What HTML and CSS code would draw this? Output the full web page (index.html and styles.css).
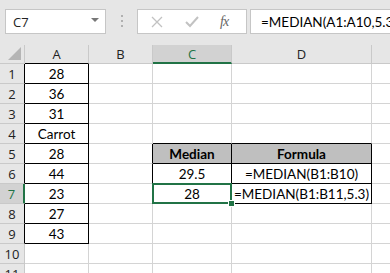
FILE: index.html
```
<!DOCTYPE html>
<html lang="en">
<head>
    <meta charset="UTF-8">
    <title>Median</title>
    <link rel="stylesheet" href="styles.css">
</head>
<body>
    <div class="bar">
        <div class="namebox">
            <span>C7</span>
            <svg class="arrow" width="8" height="5" viewBox="0 0 8 5"><path d="M0 0H8L4 4Z" fill="#777"/></svg>
        </div>
        <svg class="dots" width="3" height="14" viewBox="0 0 3 14"><rect x="0" y="0" width="2" height="2" fill="#b0b0b0"/><rect x="0" y="5" width="2" height="2" fill="#b0b0b0"/><rect x="0" y="10" width="2" height="2" fill="#b0b0b0"/></svg>
        <div class="fxbox">
            <svg class="cancel" width="12" height="12" viewBox="0 0 12 12"><path d="M1 1L11 11M11 1L1 11" stroke="#c2c2c2" stroke-width="1.3"/></svg>
            <svg class="enter" width="14" height="12" viewBox="0 0 14 12"><path d="M1 6L5 10L13 1" stroke="#c2c2c2" stroke-width="2" fill="none"/></svg>
            <span class="fx">fx</span>
        </div>
        <div class="formula">=MEDIAN(A1:A10,5.3)</div>
    </div>

    <div class="sheet">
        <!-- header row -->
        <div class="h corner"><svg width="13" height="13" viewBox="0 0 13 13"><path d="M13 0V13H0Z" fill="#b5b5b5"/></svg></div>
        <div class="h bb">A</div>
        <div class="h">B</div>
        <div class="h sel-col">C</div>
        <div class="h">D</div>
        <div class="h"></div>

        <div class="rh br">1</div>
        <div class="c br bb">28</div><div class="c"></div><div class="c"></div><div class="c"></div><div class="c"></div>

        <div class="rh br">2</div>
        <div class="c br bb">36</div><div class="c"></div><div class="c"></div><div class="c"></div><div class="c"></div>

        <div class="rh br">3</div>
        <div class="c br bb">31</div><div class="c"></div><div class="c"></div><div class="c"></div><div class="c"></div>

        <div class="rh br">4</div>
        <div class="c br bb">Carrot</div><div class="c"></div><div class="c bb"></div><div class="c bb"></div><div class="c"></div>

        <div class="rh br">5</div>
        <div class="c br bb">28</div><div class="c br"></div><div class="c br bb th">Median</div><div class="c br bb th">Formula</div><div class="c"></div>

        <div class="rh br">6</div>
        <div class="c br bb">44</div><div class="c br"></div><div class="c br bb">29.5</div><div class="c br bb">=MEDIAN(B1:B10)</div><div class="c"></div>

        <div class="rh sel-row">7</div>
        <div class="c br bb">23</div><div class="c br"></div><div class="c br bb active">28</div><div class="c br bb">=MEDIAN(B1:B11,5.3)</div><div class="c"></div>

        <div class="rh br">8</div>
        <div class="c br bb">27</div><div class="c"></div><div class="c"></div><div class="c"></div><div class="c"></div>

        <div class="rh br">9</div>
        <div class="c br bb">43</div><div class="c"></div><div class="c"></div><div class="c"></div><div class="c"></div>

        <div class="rh">10</div>
        <div class="c"></div><div class="c"></div><div class="c"></div><div class="c"></div><div class="c"></div>

        <div class="rh">11</div>
        <div class="c"></div><div class="c"></div><div class="c"></div><div class="c"></div><div class="c"></div>
    </div>
</body>
</html>
```

FILE: styles.css
```
* {
    box-sizing: border-box;
}

body {
    margin: 0;
    width: 390px;
    height: 273px;
    overflow: hidden;
    background-color: #e6e6e6;
    font-family: Lato, "Liberation Sans", sans-serif;
}

.bar {
    height: 45px;
    display: flex;
    align-items: flex-start;
    padding: 9px 0 0 5px;
    white-space: nowrap;
}

.namebox {
    width: 101px;
    height: 25px;
    background-color: white;
    border: 1px solid #c6c6c6;
    display: flex;
    align-items: center;
    justify-content: space-between;
    padding: 0 6px 0 7px;
    font-family: "Open Sans", sans-serif;
    font-size: 13px;
    color: #222;
}

.namebox .arrow {
    margin-top: -2px;
}

.dots {
    margin: 6px 0 0 15px;
}

.fxbox {
    width: 110px;
    height: 25px;
    margin-left: 13px;
    background-color: white;
    border: 1px solid #c6c6c6;
    display: flex;
    align-items: center;
    padding-left: 13px;
}

.fxbox .enter {
    margin-left: 22px;
}

.fx {
    margin-left: 21px;
    font-family: "Liberation Serif", serif;
    font-style: italic;
    font-size: 14px;
    color: #666;
    letter-spacing: -1px;
}

.formula {
    flex: 1;
    height: 25px;
    margin-left: 3px;
    background-color: white;
    border: 1px solid #c6c6c6;
    border-right: none;
    padding-left: 10px;
    display: flex;
    align-items: center;
    font-size: 13.5px;
    color: #000;
    overflow: hidden;
}

.sheet {
    display: grid;
    grid-template-columns: 25px 64px 64px 79px 140px 60px;
    grid-template-rows: 19px repeat(11, 20px);
    background-color: white;
}

.sheet > div {
    display: flex;
    align-items: center;
    justify-content: center;
    border-right: 1px solid #d4d4d4;
    border-bottom: 1px solid #d4d4d4;
    font-size: 13.5px;
    color: #000;
    white-space: nowrap;
}

.sheet .h,
.sheet .rh {
    background-color: #e6e6e6;
    border-color: #c9c9c9;
    font-family: "Open Sans", sans-serif;
    font-size: 13px;
    color: #222;
}

.sheet .corner {
    justify-content: flex-end;
    align-items: flex-end;
    padding: 0 3px 3px 0;
}

.sheet .br {
    border-right-color: #000;
}

.sheet .bb {
    border-bottom-color: #000;
}

.sheet .sel-col {
    background-color: #d2d2d2;
    border-bottom: 2px solid #217346;
    color: #217346;
}

.sheet .sel-row {
    background-color: #d2d2d2;
    border-right: 2px solid #217346;
    color: #217346;
}

.sheet .th {
    background-color: #bfbfbf;
    font-weight: bold;
}

.sheet .active {
    position: relative;
}

.sheet .active::after {
    content: "";
    position: absolute;
    left: -1px;
    top: -1px;
    right: -1px;
    bottom: -1px;
    border: 2px solid #217346;
}

.sheet .active::before {
    content: "";
    position: absolute;
    right: -4px;
    bottom: -4px;
    width: 5px;
    height: 5px;
    background-color: #217346;
    border: 1px solid white;
    z-index: 1;
}
```
